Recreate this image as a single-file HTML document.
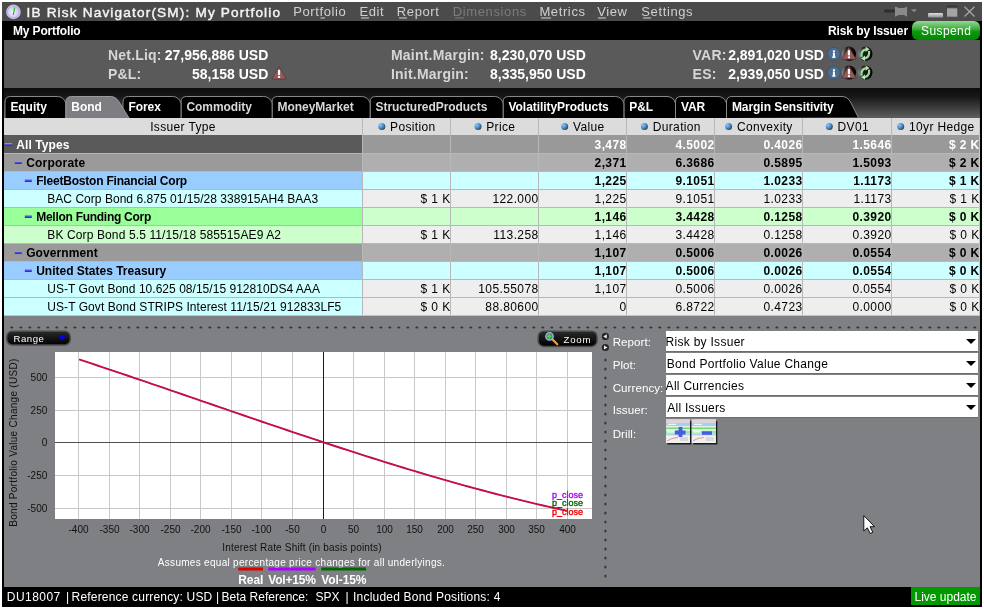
<!DOCTYPE html>
<html><head><meta charset="utf-8"><style>
html,body{margin:0;padding:0;background:#fff;width:984px;height:609px;overflow:hidden}
svg{display:block;will-change:transform}
text{font-family:"Liberation Sans", sans-serif;}
</style></head><body>
<svg width="984" height="609" viewBox="0 0 984 609">
<rect x="0" y="0" width="984" height="609" fill="#ffffff" />
<rect x="2" y="2" width="980" height="605" fill="#000000" />
<rect x="2" y="2" width="980" height="19" fill="#4b4b4b" />
<defs><radialGradient id="gIcon" cx="0.45" cy="0.55" r="0.6"><stop offset="0" stop-color="#f4f4ff"/><stop offset="1" stop-color="#c0c0ea"/></radialGradient><linearGradient id="gTabBar" x1="0" y1="0" x2="0" y2="1"><stop offset="0" stop-color="#0c0c0c"/><stop offset="0.3" stop-color="#181818"/><stop offset="1" stop-color="#5e5e5e"/></linearGradient><linearGradient id="gSusp" x1="0" y1="0" x2="0" y2="1"><stop offset="0" stop-color="#98d898"/><stop offset="0.42" stop-color="#3cae3c"/><stop offset="0.56" stop-color="#0e960e"/><stop offset="1" stop-color="#008a00"/></linearGradient><linearGradient id="gMin" x1="0" y1="0" x2="0" y2="1"><stop offset="0" stop-color="#e0e0e0"/><stop offset="1" stop-color="#909090"/></linearGradient><linearGradient id="gPill" x1="0" y1="0" x2="0" y2="1"><stop offset="0" stop-color="#2a2a2a"/><stop offset="1" stop-color="#000"/></linearGradient><radialGradient id="gDot" cx="0.3" cy="0.3" r="0.8"><stop offset="0" stop-color="#8cc4ff"/><stop offset="0.5" stop-color="#4f90d0"/><stop offset="0.85" stop-color="#2a5a70"/><stop offset="1" stop-color="#1a4040"/></radialGradient><linearGradient id="gDark" x1="0" y1="0" x2="1" y2="0"><stop offset="0" stop-color="#8a8a8a"/><stop offset="0.35" stop-color="#222"/><stop offset="1" stop-color="#000"/></linearGradient></defs>
<circle cx="13.45" cy="11.9" r="7.3" fill="#c4c4ee"/>
<circle cx="13.45" cy="11.9" r="5.9" fill="url(#gIcon)" stroke="#a8a8d0" stroke-width="0.7"/>
<line x1="14.1" y1="10.8" x2="13.2" y2="15" stroke="#707088" stroke-width="1.1"/>
<line x1="14.6" y1="7.3" x2="14.1" y2="11" stroke="#30d030" stroke-width="1.5"/>
<text x="26.5" y="16.7" font-size="13.6" font-weight="normal" fill="#f4f4f4" text-anchor="start" letter-spacing="1.17" stroke="#f4f4f4" stroke-width="0.45">IB Risk Navigator(SM): My Portfolio</text>
<text x="293.2" y="16.3" font-size="13" font-weight="normal" fill="#d0d0d0" text-anchor="start" letter-spacing="0.62" >Portfolio</text>
<text x="359.4" y="16.3" font-size="13" font-weight="normal" fill="#d0d0d0" text-anchor="start" letter-spacing="0.62" >Edit</text>
<text x="396.8" y="16.3" font-size="13" font-weight="normal" fill="#d0d0d0" text-anchor="start" letter-spacing="0.62" >Report</text>
<text x="452.8" y="16.3" font-size="13" font-weight="normal" fill="#7c7c7c" text-anchor="start" letter-spacing="0.62" >Dimensions</text>
<text x="539.4" y="16.3" font-size="13" font-weight="normal" fill="#d0d0d0" text-anchor="start" letter-spacing="0.62" >Metrics</text>
<text x="597.2" y="16.3" font-size="13" font-weight="normal" fill="#d0d0d0" text-anchor="start" letter-spacing="0.62" >View</text>
<text x="641.3" y="16.3" font-size="13" font-weight="normal" fill="#d0d0d0" text-anchor="start" letter-spacing="0.62" >Settings</text>
<rect x="320.5" y="17.5" width="4.5" height="1" fill="#d0d0d0" />
<rect x="361" y="17.5" width="8" height="1" fill="#d0d0d0" />
<rect x="399" y="17.5" width="8" height="1" fill="#d0d0d0" />
<rect x="455" y="17.5" width="9" height="1" fill="#7c7c7c" />
<rect x="541" y="17.5" width="10" height="1" fill="#d0d0d0" />
<rect x="598" y="17.5" width="8" height="1" fill="#d0d0d0" />
<rect x="643" y="17.5" width="8" height="1" fill="#d0d0d0" />
<rect x="884" y="9.6" width="11" height="3" rx="1.4" fill="#2e2e2e"/>
<path d="M895 6.5 L899 8 L904 8 L907 6.5 L907 16.8 L904 15 L899 15 L895 16.8 Z" fill="#8a8a8a"/>
<path d="M911 9.3 L917 9.3 L914 12.3 Z" fill="#8a8a8a"/>
<rect x="928" y="13" width="15" height="4.4" rx="1.2" fill="url(#gMin)"/>
<rect x="947" y="8.3" width="10.3" height="8.4" fill="#a4a4a4" />
<rect x="946.5" y="5.6" width="11.5" height="1.2" fill="#353535" />
<path d="M964.5 6.8 L974.5 16.5 M974.5 6.8 L964.5 16.5" stroke="#a8a8a8" stroke-width="1.2"/>
<text x="13" y="34.5" font-size="12" font-weight="bold" fill="#ffffff" text-anchor="start" letter-spacing="-0.15" >My Portfolio</text>
<text x="828" y="34.7" font-size="12" font-weight="bold" fill="#ffffff" text-anchor="start" letter-spacing="-0.1" >Risk by Issuer</text>
<rect x="912" y="21" width="68" height="19" rx="6" fill="url(#gSusp)"/>
<text x="946.2" y="34.7" font-size="12" font-weight="normal" fill="#ffffff" text-anchor="middle" letter-spacing="0.4" >Suspend</text>
<rect x="4" y="40" width="976" height="48" fill="#5a5a5a" />
<text x="108" y="59.7" font-size="14" font-weight="bold" fill="#d6d6d6" text-anchor="start" letter-spacing="0.2" >Net.Liq:</text>
<text x="268.3" y="59.7" font-size="14" font-weight="bold" fill="#ffffff" text-anchor="end" >27,956,886 USD</text>
<text x="108" y="78.6" font-size="14" font-weight="bold" fill="#d6d6d6" text-anchor="start" letter-spacing="0.2" >P&amp;L:</text>
<text x="268.3" y="78.6" font-size="14" font-weight="bold" fill="#ffffff" text-anchor="end" >58,158 USD</text>
<text x="391" y="59.7" font-size="14" font-weight="bold" fill="#d6d6d6" text-anchor="start" letter-spacing="0.2" >Maint.Margin:</text>
<text x="585.8" y="59.7" font-size="14" font-weight="bold" fill="#ffffff" text-anchor="end" >8,230,070 USD</text>
<text x="391" y="78.6" font-size="14" font-weight="bold" fill="#d6d6d6" text-anchor="start" letter-spacing="0.2" >Init.Margin:</text>
<text x="585.8" y="78.6" font-size="14" font-weight="bold" fill="#ffffff" text-anchor="end" >8,335,950 USD</text>
<text x="692.6" y="59.7" font-size="14" font-weight="bold" fill="#d6d6d6" text-anchor="start" letter-spacing="0.2" >VAR:</text>
<text x="823.9" y="59.7" font-size="14" font-weight="bold" fill="#ffffff" text-anchor="end" >2,891,020 USD</text>
<text x="692.6" y="78.6" font-size="14" font-weight="bold" fill="#d6d6d6" text-anchor="start" letter-spacing="0.2" >ES:</text>
<text x="823.9" y="78.6" font-size="14" font-weight="bold" fill="#ffffff" text-anchor="end" >2,939,050 USD</text>
<path d="M279 66.6 L286.2 79.0 L272 79.0 Z" fill="#9c5858" stroke="#3a2a2a" stroke-width="0.5"/>
<rect x="278" y="69.9" width="2.1" height="5.2" fill="#fff"/><rect x="278" y="76.1" width="2.1" height="1.9" fill="#fff"/>
<circle cx="833.8" cy="53.8" r="6.4" fill="#4c6c92" stroke="#34506e" stroke-width="0.8"/>
<rect x="832.9" y="50.4" width="2" height="1.8" fill="#fff"/><rect x="832.9" y="52.599999999999994" width="2" height="5" fill="#fff"/><rect x="832.0" y="56.599999999999994" width="3.6" height="1.1" fill="#fff"/>
<circle cx="848.9" cy="53.8" r="7.2" fill="url(#gDark)"/>
<path d="M848.9 46.9 L856.1 59.3 L841.9 59.3 Z" fill="#9c5858" stroke="#3a2a2a" stroke-width="0.5"/>
<rect x="847.9" y="50.199999999999996" width="2.1" height="5.2" fill="#fff"/><rect x="847.9" y="56.4" width="2.1" height="1.9" fill="#fff"/>
<circle cx="865.3" cy="53.8" r="7.2" fill="url(#gDark)"/>
<path d="M861.5 56.8 Q860.8 50.3 865.8 49.3" stroke="#9cd89c" stroke-width="2.2" fill="none"/>
<path d="M865.5999999999999 46.599999999999994 L869.5 49.199999999999996 L865.5999999999999 52.0 Z" fill="#b0e8b0"/>
<path d="M869.0999999999999 50.8 Q869.8 57.3 864.8 58.3" stroke="#9cd89c" stroke-width="2.2" fill="none"/>
<path d="M865.0 61.0 L861.0999999999999 58.4 L865.0 55.599999999999994 Z" fill="#b0e8b0"/>
<circle cx="833.8" cy="72.6" r="6.4" fill="#4c6c92" stroke="#34506e" stroke-width="0.8"/>
<rect x="832.9" y="69.19999999999999" width="2" height="1.8" fill="#fff"/><rect x="832.9" y="71.39999999999999" width="2" height="5" fill="#fff"/><rect x="832.0" y="75.39999999999999" width="3.6" height="1.1" fill="#fff"/>
<circle cx="848.9" cy="72.6" r="7.2" fill="url(#gDark)"/>
<path d="M848.9 65.69999999999999 L856.1 78.1 L841.9 78.1 Z" fill="#9c5858" stroke="#3a2a2a" stroke-width="0.5"/>
<rect x="847.9" y="69.0" width="2.1" height="5.2" fill="#fff"/><rect x="847.9" y="75.19999999999999" width="2.1" height="1.9" fill="#fff"/>
<circle cx="865.3" cy="72.6" r="7.2" fill="url(#gDark)"/>
<path d="M861.5 75.6 Q860.8 69.1 865.8 68.1" stroke="#9cd89c" stroke-width="2.2" fill="none"/>
<path d="M865.5999999999999 65.39999999999999 L869.5 68.0 L865.5999999999999 70.8 Z" fill="#b0e8b0"/>
<path d="M869.0999999999999 69.6 Q869.8 76.1 864.8 77.1" stroke="#9cd89c" stroke-width="2.2" fill="none"/>
<path d="M865.0 79.8 L861.0999999999999 77.19999999999999 L865.0 74.39999999999999 Z" fill="#b0e8b0"/>
<rect x="4" y="88" width="976" height="30" fill="url(#gTabBar)" />
<path d="M726.5 118.5 L726.5 102 Q726.5 96.5 732 96.5 L843 96.5 Q847 96.5 850 101 L858.6 118 Z" fill="#000" stroke="#888" stroke-width="1"/>
<path d="M675.5 118.5 L675.5 102 Q675.5 96.5 681 96.5 L718 96.5 Q724 96.5 726.5 103 L726.5 118.5 Z" fill="#000" stroke="#888" stroke-width="1"/>
<path d="M623.9 118.5 L623.9 102 Q623.9 96.5 629.4 96.5 L667 96.5 Q673 96.5 675.5 103 L675.5 118.5 Z" fill="#000" stroke="#888" stroke-width="1"/>
<path d="M503.1 118.5 L503.1 102 Q503.1 96.5 508.6 96.5 L615.4 96.5 Q621.4 96.5 623.9 103 L623.9 118.5 Z" fill="#000" stroke="#888" stroke-width="1"/>
<path d="M370.1 118.5 L370.1 102 Q370.1 96.5 375.6 96.5 L494.6 96.5 Q500.6 96.5 503.1 103 L503.1 118.5 Z" fill="#000" stroke="#888" stroke-width="1"/>
<path d="M272.1 118.5 L272.1 102 Q272.1 96.5 277.6 96.5 L361.6 96.5 Q367.6 96.5 370.1 103 L370.1 118.5 Z" fill="#000" stroke="#888" stroke-width="1"/>
<path d="M181.0 118.5 L181.0 102 Q181.0 96.5 186.5 96.5 L263.6 96.5 Q269.6 96.5 272.1 103 L272.1 118.5 Z" fill="#000" stroke="#888" stroke-width="1"/>
<path d="M123.0 118.5 L123.0 102 Q123.0 96.5 128.5 96.5 L172.5 96.5 Q178.5 96.5 181.0 103 L181.0 118.5 Z" fill="#000" stroke="#888" stroke-width="1"/>
<path d="M5.0 118.5 L5.0 102 Q5.0 96.5 10.5 96.5 L57.400000000000006 96.5 Q63.400000000000006 96.5 65.9 103 L65.9 118.5 Z" fill="#000" stroke="#888" stroke-width="1"/>
<path d="M65.9 118.5 L65.9 102 Q65.9 96.5 71.5 96.5 L111.5 96.5 Q115.5 96.5 118.5 101 L129.4 118.5 Z" fill="#7d7d82" stroke="#9a9a9a" stroke-width="1"/>
<text x="10.4" y="110.7" font-size="12" font-weight="bold" fill="#ffffff" text-anchor="start" letter-spacing="-0.05" >Equity</text>
<text x="71.30000000000001" y="110.7" font-size="12" font-weight="bold" fill="#ffffff" text-anchor="start" letter-spacing="-0.05" >Bond</text>
<text x="128.4" y="110.7" font-size="12" font-weight="bold" fill="#ffffff" text-anchor="start" letter-spacing="-0.05" >Forex</text>
<text x="186.4" y="110.7" font-size="12" font-weight="bold" fill="#d8d8d8" text-anchor="start" letter-spacing="-0.05" >Commodity</text>
<text x="277.5" y="110.7" font-size="12" font-weight="bold" fill="#d8d8d8" text-anchor="start" letter-spacing="-0.05" >MoneyMarket</text>
<text x="375.5" y="110.7" font-size="12" font-weight="bold" fill="#d8d8d8" text-anchor="start" letter-spacing="-0.05" >StructuredProducts</text>
<text x="508.5" y="110.7" font-size="12" font-weight="bold" fill="#ffffff" text-anchor="start" letter-spacing="-0.05" >VolatilityProducts</text>
<text x="629.3" y="110.7" font-size="12" font-weight="bold" fill="#ffffff" text-anchor="start" letter-spacing="-0.05" >P&amp;L</text>
<text x="680.9" y="110.7" font-size="12" font-weight="bold" fill="#ffffff" text-anchor="start" letter-spacing="-0.05" >VAR</text>
<text x="731.9" y="110.7" font-size="12" font-weight="bold" fill="#ffffff" text-anchor="start" letter-spacing="-0.05" >Margin Sensitivity</text>
<rect x="4" y="118" width="975" height="17" fill="#dcdcdc" />
<text x="183.0" y="130.5" font-size="12" font-weight="normal" fill="#000" text-anchor="middle" letter-spacing="0.35" >Issuer Type</text>
<circle cx="381.8" cy="126.5" r="3.5" fill="url(#gDot)"/>
<text x="390.05" y="130.5" font-size="12" font-weight="normal" fill="#000" text-anchor="start" letter-spacing="0.35" >Position</text>
<circle cx="478.0" cy="126.5" r="3.5" fill="url(#gDot)"/>
<text x="486.255" y="130.5" font-size="12" font-weight="normal" fill="#000" text-anchor="start" letter-spacing="0.35" >Price</text>
<circle cx="564.7" cy="126.5" r="3.5" fill="url(#gDot)"/>
<text x="573.02" y="130.5" font-size="12" font-weight="normal" fill="#000" text-anchor="start" letter-spacing="0.35" >Value</text>
<circle cx="644.4" cy="126.5" r="3.5" fill="url(#gDot)"/>
<text x="652.7199999999999" y="130.5" font-size="12" font-weight="normal" fill="#000" text-anchor="start" letter-spacing="0.35" >Duration</text>
<circle cx="728.6" cy="126.5" r="3.5" fill="url(#gDot)"/>
<text x="736.88" y="130.5" font-size="12" font-weight="normal" fill="#000" text-anchor="start" letter-spacing="0.35" >Convexity</text>
<circle cx="829.3" cy="126.5" r="3.5" fill="url(#gDot)"/>
<text x="837.5849999999999" y="130.5" font-size="12" font-weight="normal" fill="#000" text-anchor="start" letter-spacing="0.35" >DV01</text>
<circle cx="900.7" cy="126.5" r="3.5" fill="url(#gDot)"/>
<text x="909.025" y="130.5" font-size="12" font-weight="normal" fill="#000" text-anchor="start" letter-spacing="0.35" >10yr Hedge</text>
<rect x="4" y="135" width="358" height="18" fill="#5a5a5a" />
<rect x="362" y="135" width="617" height="18" fill="#999999" />
<rect x="4.8" y="143" width="7" height="1" fill="#8c8cff" />
<rect x="4.8" y="144" width="7" height="1" fill="#5050e0" />
<rect x="4.8" y="145" width="7" height="1" fill="#3434a0" />
<text x="16.2" y="148.7" font-size="12" font-weight="bold" fill="#ffffff" text-anchor="start" letter-spacing="0.1" >All Types</text>
<text x="626.6" y="148.7" font-size="12" font-weight="bold" fill="#ffffff" text-anchor="end" letter-spacing="0.4" >3,478</text>
<text x="714.6" y="148.7" font-size="12" font-weight="bold" fill="#ffffff" text-anchor="end" letter-spacing="0.4" >4.5002</text>
<text x="802.6" y="148.7" font-size="12" font-weight="bold" fill="#ffffff" text-anchor="end" letter-spacing="0.4" >0.4026</text>
<text x="891.6" y="148.7" font-size="12" font-weight="bold" fill="#ffffff" text-anchor="end" letter-spacing="0.4" >1.5646</text>
<text x="979.6" y="148.7" font-size="12" font-weight="bold" fill="#ffffff" text-anchor="end" letter-spacing="0.4" >$ 2 K</text>
<rect x="4" y="153" width="358" height="18" fill="#9a9a9a" />
<rect x="362" y="153" width="617" height="18" fill="#afafaf" />
<rect x="4" y="153" width="975" height="1" fill="#b8b8b8" />
<rect x="14.8" y="161" width="7" height="1" fill="#8c8cff" />
<rect x="14.8" y="162" width="7" height="1" fill="#5050e0" />
<rect x="14.8" y="163" width="7" height="1" fill="#3434a0" />
<text x="26.200000000000003" y="166.7" font-size="12" font-weight="bold" fill="#000000" text-anchor="start" letter-spacing="0.2" >Corporate</text>
<text x="626.6" y="166.7" font-size="12" font-weight="bold" fill="#000000" text-anchor="end" letter-spacing="0.4" >2,371</text>
<text x="714.6" y="166.7" font-size="12" font-weight="bold" fill="#000000" text-anchor="end" letter-spacing="0.4" >6.3686</text>
<text x="802.6" y="166.7" font-size="12" font-weight="bold" fill="#000000" text-anchor="end" letter-spacing="0.4" >0.5895</text>
<text x="891.6" y="166.7" font-size="12" font-weight="bold" fill="#000000" text-anchor="end" letter-spacing="0.4" >1.5093</text>
<text x="979.6" y="166.7" font-size="12" font-weight="bold" fill="#000000" text-anchor="end" letter-spacing="0.4" >$ 2 K</text>
<rect x="4" y="171" width="358" height="18" fill="#99ccff" />
<rect x="362" y="171" width="617" height="18" fill="#ccffff" />
<rect x="4" y="171" width="975" height="1" fill="#b8b8b8" />
<rect x="24.8" y="179" width="7" height="1" fill="#8c8cff" />
<rect x="24.8" y="180" width="7" height="1" fill="#5050e0" />
<rect x="24.8" y="181" width="7" height="1" fill="#3434a0" />
<text x="36.2" y="184.7" font-size="12" font-weight="bold" fill="#000000" text-anchor="start" letter-spacing="-0.2" >FleetBoston Financial Corp</text>
<text x="626.6" y="184.7" font-size="12" font-weight="bold" fill="#000000" text-anchor="end" letter-spacing="0.4" >1,225</text>
<text x="714.6" y="184.7" font-size="12" font-weight="bold" fill="#000000" text-anchor="end" letter-spacing="0.4" >9.1051</text>
<text x="802.6" y="184.7" font-size="12" font-weight="bold" fill="#000000" text-anchor="end" letter-spacing="0.4" >1.0233</text>
<text x="891.6" y="184.7" font-size="12" font-weight="bold" fill="#000000" text-anchor="end" letter-spacing="0.4" >1.1173</text>
<text x="979.6" y="184.7" font-size="12" font-weight="bold" fill="#000000" text-anchor="end" letter-spacing="0.4" >$ 1 K</text>
<rect x="4" y="189" width="358" height="18" fill="#ccffff" />
<rect x="362" y="189" width="617" height="18" fill="#eeeeee" />
<rect x="4" y="189" width="975" height="1" fill="#b8b8b8" />
<text x="47.3" y="202.7" font-size="12" font-weight="normal" fill="#000000" text-anchor="start" letter-spacing="0.03" >BAC Corp Bond 6.875 01/15/28 338915AH4 BAA3</text>
<text x="450.6" y="202.7" font-size="12" font-weight="normal" fill="#000000" text-anchor="end" letter-spacing="0.4" >$ 1 K</text>
<text x="538.6" y="202.7" font-size="12" font-weight="normal" fill="#000000" text-anchor="end" letter-spacing="0.4" >122.000</text>
<text x="626.6" y="202.7" font-size="12" font-weight="normal" fill="#000000" text-anchor="end" letter-spacing="0.4" >1,225</text>
<text x="714.6" y="202.7" font-size="12" font-weight="normal" fill="#000000" text-anchor="end" letter-spacing="0.4" >9.1051</text>
<text x="802.6" y="202.7" font-size="12" font-weight="normal" fill="#000000" text-anchor="end" letter-spacing="0.4" >1.0233</text>
<text x="891.6" y="202.7" font-size="12" font-weight="normal" fill="#000000" text-anchor="end" letter-spacing="0.4" >1.1173</text>
<text x="979.6" y="202.7" font-size="12" font-weight="normal" fill="#000000" text-anchor="end" letter-spacing="0.4" >$ 1 K</text>
<rect x="4" y="207" width="358" height="18" fill="#99ff99" />
<rect x="362" y="207" width="617" height="18" fill="#ccffcc" />
<rect x="4" y="207" width="975" height="1" fill="#b8b8b8" />
<rect x="24.8" y="215" width="7" height="1" fill="#8c8cff" />
<rect x="24.8" y="216" width="7" height="1" fill="#5050e0" />
<rect x="24.8" y="217" width="7" height="1" fill="#3434a0" />
<text x="36.2" y="220.7" font-size="12" font-weight="bold" fill="#000000" text-anchor="start" letter-spacing="-0.27" >Mellon Funding Corp</text>
<text x="626.6" y="220.7" font-size="12" font-weight="bold" fill="#000000" text-anchor="end" letter-spacing="0.4" >1,146</text>
<text x="714.6" y="220.7" font-size="12" font-weight="bold" fill="#000000" text-anchor="end" letter-spacing="0.4" >3.4428</text>
<text x="802.6" y="220.7" font-size="12" font-weight="bold" fill="#000000" text-anchor="end" letter-spacing="0.4" >0.1258</text>
<text x="891.6" y="220.7" font-size="12" font-weight="bold" fill="#000000" text-anchor="end" letter-spacing="0.4" >0.3920</text>
<text x="979.6" y="220.7" font-size="12" font-weight="bold" fill="#000000" text-anchor="end" letter-spacing="0.4" >$ 0 K</text>
<rect x="4" y="225" width="358" height="18" fill="#ccffcc" />
<rect x="362" y="225" width="617" height="18" fill="#eeeeee" />
<rect x="4" y="225" width="975" height="1" fill="#b8b8b8" />
<text x="47.3" y="238.7" font-size="12" font-weight="normal" fill="#000000" text-anchor="start" letter-spacing="0.12" >BK Corp Bond 5.5 11/15/18 585515AE9 A2</text>
<text x="450.6" y="238.7" font-size="12" font-weight="normal" fill="#000000" text-anchor="end" letter-spacing="0.4" >$ 1 K</text>
<text x="538.6" y="238.7" font-size="12" font-weight="normal" fill="#000000" text-anchor="end" letter-spacing="0.4" >113.258</text>
<text x="626.6" y="238.7" font-size="12" font-weight="normal" fill="#000000" text-anchor="end" letter-spacing="0.4" >1,146</text>
<text x="714.6" y="238.7" font-size="12" font-weight="normal" fill="#000000" text-anchor="end" letter-spacing="0.4" >3.4428</text>
<text x="802.6" y="238.7" font-size="12" font-weight="normal" fill="#000000" text-anchor="end" letter-spacing="0.4" >0.1258</text>
<text x="891.6" y="238.7" font-size="12" font-weight="normal" fill="#000000" text-anchor="end" letter-spacing="0.4" >0.3920</text>
<text x="979.6" y="238.7" font-size="12" font-weight="normal" fill="#000000" text-anchor="end" letter-spacing="0.4" >$ 0 K</text>
<rect x="4" y="243" width="358" height="18" fill="#9a9a9a" />
<rect x="362" y="243" width="617" height="18" fill="#afafaf" />
<rect x="4" y="243" width="975" height="1" fill="#b8b8b8" />
<rect x="14.8" y="251" width="7" height="1" fill="#8c8cff" />
<rect x="14.8" y="252" width="7" height="1" fill="#5050e0" />
<rect x="14.8" y="253" width="7" height="1" fill="#3434a0" />
<text x="26.200000000000003" y="256.7" font-size="12" font-weight="bold" fill="#000000" text-anchor="start" letter-spacing="0.1" >Government</text>
<text x="626.6" y="256.7" font-size="12" font-weight="bold" fill="#000000" text-anchor="end" letter-spacing="0.4" >1,107</text>
<text x="714.6" y="256.7" font-size="12" font-weight="bold" fill="#000000" text-anchor="end" letter-spacing="0.4" >0.5006</text>
<text x="802.6" y="256.7" font-size="12" font-weight="bold" fill="#000000" text-anchor="end" letter-spacing="0.4" >0.0026</text>
<text x="891.6" y="256.7" font-size="12" font-weight="bold" fill="#000000" text-anchor="end" letter-spacing="0.4" >0.0554</text>
<text x="979.6" y="256.7" font-size="12" font-weight="bold" fill="#000000" text-anchor="end" letter-spacing="0.4" >$ 0 K</text>
<rect x="4" y="261" width="358" height="18" fill="#99ccff" />
<rect x="362" y="261" width="617" height="18" fill="#ccffff" />
<rect x="4" y="261" width="975" height="1" fill="#b8b8b8" />
<rect x="24.8" y="269" width="7" height="1" fill="#8c8cff" />
<rect x="24.8" y="270" width="7" height="1" fill="#5050e0" />
<rect x="24.8" y="271" width="7" height="1" fill="#3434a0" />
<text x="36.2" y="274.7" font-size="12" font-weight="bold" fill="#000000" text-anchor="start" >United States Treasury</text>
<text x="626.6" y="274.7" font-size="12" font-weight="bold" fill="#000000" text-anchor="end" letter-spacing="0.4" >1,107</text>
<text x="714.6" y="274.7" font-size="12" font-weight="bold" fill="#000000" text-anchor="end" letter-spacing="0.4" >0.5006</text>
<text x="802.6" y="274.7" font-size="12" font-weight="bold" fill="#000000" text-anchor="end" letter-spacing="0.4" >0.0026</text>
<text x="891.6" y="274.7" font-size="12" font-weight="bold" fill="#000000" text-anchor="end" letter-spacing="0.4" >0.0554</text>
<text x="979.6" y="274.7" font-size="12" font-weight="bold" fill="#000000" text-anchor="end" letter-spacing="0.4" >$ 0 K</text>
<rect x="4" y="279" width="358" height="18" fill="#ccffff" />
<rect x="362" y="279" width="617" height="18" fill="#eeeeee" />
<rect x="4" y="279" width="975" height="1" fill="#b8b8b8" />
<text x="47.3" y="292.7" font-size="12" font-weight="normal" fill="#000000" text-anchor="start" letter-spacing="0.03" >US-T Govt Bond 10.625 08/15/15 912810DS4 AAA</text>
<text x="450.6" y="292.7" font-size="12" font-weight="normal" fill="#000000" text-anchor="end" letter-spacing="0.4" >$ 1 K</text>
<text x="538.6" y="292.7" font-size="12" font-weight="normal" fill="#000000" text-anchor="end" letter-spacing="0.4" >105.55078</text>
<text x="626.6" y="292.7" font-size="12" font-weight="normal" fill="#000000" text-anchor="end" letter-spacing="0.4" >1,107</text>
<text x="714.6" y="292.7" font-size="12" font-weight="normal" fill="#000000" text-anchor="end" letter-spacing="0.4" >0.5006</text>
<text x="802.6" y="292.7" font-size="12" font-weight="normal" fill="#000000" text-anchor="end" letter-spacing="0.4" >0.0026</text>
<text x="891.6" y="292.7" font-size="12" font-weight="normal" fill="#000000" text-anchor="end" letter-spacing="0.4" >0.0554</text>
<text x="979.6" y="292.7" font-size="12" font-weight="normal" fill="#000000" text-anchor="end" letter-spacing="0.4" >$ 0 K</text>
<rect x="4" y="297" width="358" height="18" fill="#ccffff" />
<rect x="362" y="297" width="617" height="18" fill="#eeeeee" />
<rect x="4" y="297" width="975" height="1" fill="#b8b8b8" />
<text x="47.3" y="310.7" font-size="12" font-weight="normal" fill="#000000" text-anchor="start" letter-spacing="0.06" >US-T Govt Bond STRIPS Interest 11/15/21 912833LF5</text>
<text x="450.6" y="310.7" font-size="12" font-weight="normal" fill="#000000" text-anchor="end" letter-spacing="0.4" >$ 0 K</text>
<text x="538.6" y="310.7" font-size="12" font-weight="normal" fill="#000000" text-anchor="end" letter-spacing="0.4" >88.80600</text>
<text x="626.6" y="310.7" font-size="12" font-weight="normal" fill="#000000" text-anchor="end" letter-spacing="0.4" >0</text>
<text x="714.6" y="310.7" font-size="12" font-weight="normal" fill="#000000" text-anchor="end" letter-spacing="0.4" >6.8722</text>
<text x="802.6" y="310.7" font-size="12" font-weight="normal" fill="#000000" text-anchor="end" letter-spacing="0.4" >0.4723</text>
<text x="891.6" y="310.7" font-size="12" font-weight="normal" fill="#000000" text-anchor="end" letter-spacing="0.4" >0.0000</text>
<text x="979.6" y="310.7" font-size="12" font-weight="normal" fill="#000000" text-anchor="end" letter-spacing="0.4" >$ 0 K</text>
<rect x="362" y="118" width="1" height="198" fill="#b8b8b8" />
<rect x="450" y="118" width="1" height="198" fill="#b8b8b8" />
<rect x="538" y="118" width="1" height="198" fill="#b8b8b8" />
<rect x="626" y="118" width="1" height="198" fill="#b8b8b8" />
<rect x="714" y="118" width="1" height="198" fill="#b8b8b8" />
<rect x="802" y="118" width="1" height="198" fill="#b8b8b8" />
<rect x="891" y="118" width="1" height="198" fill="#b8b8b8" />
<rect x="4" y="315" width="975" height="1" fill="#c4c4c4" />
<rect x="979" y="118" width="1" height="198" fill="#c8c8c8" />
<rect x="4" y="316" width="976" height="271" fill="#7f8084" />
<ellipse cx="11.8" cy="327.5" rx="1.5" ry="1.1" fill="#343434"/>
<ellipse cx="20.8" cy="327.5" rx="1.5" ry="1.1" fill="#343434"/>
<ellipse cx="29.8" cy="327.5" rx="1.5" ry="1.1" fill="#343434"/>
<ellipse cx="38.8" cy="327.5" rx="1.5" ry="1.1" fill="#343434"/>
<ellipse cx="47.8" cy="327.5" rx="1.5" ry="1.1" fill="#343434"/>
<ellipse cx="56.8" cy="327.5" rx="1.5" ry="1.1" fill="#343434"/>
<ellipse cx="65.8" cy="327.5" rx="1.5" ry="1.1" fill="#343434"/>
<ellipse cx="74.8" cy="327.5" rx="1.5" ry="1.1" fill="#343434"/>
<ellipse cx="83.8" cy="327.5" rx="1.5" ry="1.1" fill="#343434"/>
<ellipse cx="92.8" cy="327.5" rx="1.5" ry="1.1" fill="#343434"/>
<ellipse cx="101.8" cy="327.5" rx="1.5" ry="1.1" fill="#343434"/>
<ellipse cx="110.8" cy="327.5" rx="1.5" ry="1.1" fill="#343434"/>
<ellipse cx="119.8" cy="327.5" rx="1.5" ry="1.1" fill="#343434"/>
<ellipse cx="128.8" cy="327.5" rx="1.5" ry="1.1" fill="#343434"/>
<ellipse cx="137.8" cy="327.5" rx="1.5" ry="1.1" fill="#343434"/>
<ellipse cx="146.8" cy="327.5" rx="1.5" ry="1.1" fill="#343434"/>
<ellipse cx="155.8" cy="327.5" rx="1.5" ry="1.1" fill="#343434"/>
<ellipse cx="164.8" cy="327.5" rx="1.5" ry="1.1" fill="#343434"/>
<ellipse cx="173.8" cy="327.5" rx="1.5" ry="1.1" fill="#343434"/>
<ellipse cx="182.8" cy="327.5" rx="1.5" ry="1.1" fill="#343434"/>
<ellipse cx="191.8" cy="327.5" rx="1.5" ry="1.1" fill="#343434"/>
<ellipse cx="200.8" cy="327.5" rx="1.5" ry="1.1" fill="#343434"/>
<ellipse cx="209.8" cy="327.5" rx="1.5" ry="1.1" fill="#343434"/>
<ellipse cx="218.8" cy="327.5" rx="1.5" ry="1.1" fill="#343434"/>
<ellipse cx="227.8" cy="327.5" rx="1.5" ry="1.1" fill="#343434"/>
<ellipse cx="236.8" cy="327.5" rx="1.5" ry="1.1" fill="#343434"/>
<ellipse cx="245.8" cy="327.5" rx="1.5" ry="1.1" fill="#343434"/>
<ellipse cx="254.8" cy="327.5" rx="1.5" ry="1.1" fill="#343434"/>
<ellipse cx="263.8" cy="327.5" rx="1.5" ry="1.1" fill="#343434"/>
<ellipse cx="272.8" cy="327.5" rx="1.5" ry="1.1" fill="#343434"/>
<ellipse cx="281.8" cy="327.5" rx="1.5" ry="1.1" fill="#343434"/>
<ellipse cx="290.8" cy="327.5" rx="1.5" ry="1.1" fill="#343434"/>
<ellipse cx="299.8" cy="327.5" rx="1.5" ry="1.1" fill="#343434"/>
<ellipse cx="308.8" cy="327.5" rx="1.5" ry="1.1" fill="#343434"/>
<ellipse cx="317.8" cy="327.5" rx="1.5" ry="1.1" fill="#343434"/>
<ellipse cx="326.8" cy="327.5" rx="1.5" ry="1.1" fill="#343434"/>
<ellipse cx="335.8" cy="327.5" rx="1.5" ry="1.1" fill="#343434"/>
<ellipse cx="344.8" cy="327.5" rx="1.5" ry="1.1" fill="#343434"/>
<ellipse cx="353.8" cy="327.5" rx="1.5" ry="1.1" fill="#343434"/>
<ellipse cx="362.8" cy="327.5" rx="1.5" ry="1.1" fill="#343434"/>
<ellipse cx="371.8" cy="327.5" rx="1.5" ry="1.1" fill="#343434"/>
<ellipse cx="380.8" cy="327.5" rx="1.5" ry="1.1" fill="#343434"/>
<ellipse cx="389.8" cy="327.5" rx="1.5" ry="1.1" fill="#343434"/>
<ellipse cx="398.8" cy="327.5" rx="1.5" ry="1.1" fill="#343434"/>
<ellipse cx="407.8" cy="327.5" rx="1.5" ry="1.1" fill="#343434"/>
<ellipse cx="416.8" cy="327.5" rx="1.5" ry="1.1" fill="#343434"/>
<ellipse cx="425.8" cy="327.5" rx="1.5" ry="1.1" fill="#343434"/>
<ellipse cx="434.8" cy="327.5" rx="1.5" ry="1.1" fill="#343434"/>
<ellipse cx="443.8" cy="327.5" rx="1.5" ry="1.1" fill="#343434"/>
<ellipse cx="452.8" cy="327.5" rx="1.5" ry="1.1" fill="#343434"/>
<ellipse cx="461.8" cy="327.5" rx="1.5" ry="1.1" fill="#343434"/>
<ellipse cx="470.8" cy="327.5" rx="1.5" ry="1.1" fill="#343434"/>
<ellipse cx="479.8" cy="327.5" rx="1.5" ry="1.1" fill="#343434"/>
<ellipse cx="488.8" cy="327.5" rx="1.5" ry="1.1" fill="#343434"/>
<ellipse cx="497.8" cy="327.5" rx="1.5" ry="1.1" fill="#343434"/>
<ellipse cx="506.8" cy="327.5" rx="1.5" ry="1.1" fill="#343434"/>
<ellipse cx="515.8" cy="327.5" rx="1.5" ry="1.1" fill="#343434"/>
<ellipse cx="524.8" cy="327.5" rx="1.5" ry="1.1" fill="#343434"/>
<ellipse cx="533.8" cy="327.5" rx="1.5" ry="1.1" fill="#343434"/>
<ellipse cx="542.8" cy="327.5" rx="1.5" ry="1.1" fill="#343434"/>
<ellipse cx="551.8" cy="327.5" rx="1.5" ry="1.1" fill="#343434"/>
<ellipse cx="560.8" cy="327.5" rx="1.5" ry="1.1" fill="#343434"/>
<ellipse cx="569.8" cy="327.5" rx="1.5" ry="1.1" fill="#343434"/>
<ellipse cx="578.8" cy="327.5" rx="1.5" ry="1.1" fill="#343434"/>
<ellipse cx="587.8" cy="327.5" rx="1.5" ry="1.1" fill="#343434"/>
<ellipse cx="596.8" cy="327.5" rx="1.5" ry="1.1" fill="#343434"/>
<ellipse cx="605.8" cy="327.5" rx="1.5" ry="1.1" fill="#343434"/>
<ellipse cx="614.8" cy="327.5" rx="1.5" ry="1.1" fill="#343434"/>
<ellipse cx="623.8" cy="327.5" rx="1.5" ry="1.1" fill="#343434"/>
<ellipse cx="632.8" cy="327.5" rx="1.5" ry="1.1" fill="#343434"/>
<ellipse cx="641.8" cy="327.5" rx="1.5" ry="1.1" fill="#343434"/>
<ellipse cx="650.8" cy="327.5" rx="1.5" ry="1.1" fill="#343434"/>
<ellipse cx="659.8" cy="327.5" rx="1.5" ry="1.1" fill="#343434"/>
<ellipse cx="668.8" cy="327.5" rx="1.5" ry="1.1" fill="#343434"/>
<ellipse cx="677.8" cy="327.5" rx="1.5" ry="1.1" fill="#343434"/>
<ellipse cx="686.8" cy="327.5" rx="1.5" ry="1.1" fill="#343434"/>
<ellipse cx="695.8" cy="327.5" rx="1.5" ry="1.1" fill="#343434"/>
<ellipse cx="704.8" cy="327.5" rx="1.5" ry="1.1" fill="#343434"/>
<ellipse cx="713.8" cy="327.5" rx="1.5" ry="1.1" fill="#343434"/>
<ellipse cx="722.8" cy="327.5" rx="1.5" ry="1.1" fill="#343434"/>
<ellipse cx="731.8" cy="327.5" rx="1.5" ry="1.1" fill="#343434"/>
<ellipse cx="740.8" cy="327.5" rx="1.5" ry="1.1" fill="#343434"/>
<ellipse cx="749.8" cy="327.5" rx="1.5" ry="1.1" fill="#343434"/>
<ellipse cx="758.8" cy="327.5" rx="1.5" ry="1.1" fill="#343434"/>
<ellipse cx="767.8" cy="327.5" rx="1.5" ry="1.1" fill="#343434"/>
<ellipse cx="776.8" cy="327.5" rx="1.5" ry="1.1" fill="#343434"/>
<ellipse cx="785.8" cy="327.5" rx="1.5" ry="1.1" fill="#343434"/>
<ellipse cx="794.8" cy="327.5" rx="1.5" ry="1.1" fill="#343434"/>
<ellipse cx="803.8" cy="327.5" rx="1.5" ry="1.1" fill="#343434"/>
<ellipse cx="812.8" cy="327.5" rx="1.5" ry="1.1" fill="#343434"/>
<ellipse cx="821.8" cy="327.5" rx="1.5" ry="1.1" fill="#343434"/>
<ellipse cx="830.8" cy="327.5" rx="1.5" ry="1.1" fill="#343434"/>
<ellipse cx="839.8" cy="327.5" rx="1.5" ry="1.1" fill="#343434"/>
<ellipse cx="848.8" cy="327.5" rx="1.5" ry="1.1" fill="#343434"/>
<ellipse cx="857.8" cy="327.5" rx="1.5" ry="1.1" fill="#343434"/>
<ellipse cx="866.8" cy="327.5" rx="1.5" ry="1.1" fill="#343434"/>
<ellipse cx="875.8" cy="327.5" rx="1.5" ry="1.1" fill="#343434"/>
<ellipse cx="884.8" cy="327.5" rx="1.5" ry="1.1" fill="#343434"/>
<ellipse cx="893.8" cy="327.5" rx="1.5" ry="1.1" fill="#343434"/>
<ellipse cx="902.8" cy="327.5" rx="1.5" ry="1.1" fill="#343434"/>
<ellipse cx="911.8" cy="327.5" rx="1.5" ry="1.1" fill="#343434"/>
<ellipse cx="920.8" cy="327.5" rx="1.5" ry="1.1" fill="#343434"/>
<ellipse cx="929.8" cy="327.5" rx="1.5" ry="1.1" fill="#343434"/>
<ellipse cx="938.8" cy="327.5" rx="1.5" ry="1.1" fill="#343434"/>
<ellipse cx="947.8" cy="327.5" rx="1.5" ry="1.1" fill="#343434"/>
<ellipse cx="956.8" cy="327.5" rx="1.5" ry="1.1" fill="#343434"/>
<ellipse cx="965.8" cy="327.5" rx="1.5" ry="1.1" fill="#343434"/>
<ellipse cx="974.8" cy="327.5" rx="1.5" ry="1.1" fill="#343434"/>
<ellipse cx="605.4" cy="360" rx="1.1" ry="1.5" fill="#343434"/>
<ellipse cx="605.4" cy="369" rx="1.1" ry="1.5" fill="#343434"/>
<ellipse cx="605.4" cy="378" rx="1.1" ry="1.5" fill="#343434"/>
<ellipse cx="605.4" cy="387" rx="1.1" ry="1.5" fill="#343434"/>
<ellipse cx="605.4" cy="396" rx="1.1" ry="1.5" fill="#343434"/>
<ellipse cx="605.4" cy="405" rx="1.1" ry="1.5" fill="#343434"/>
<ellipse cx="605.4" cy="414" rx="1.1" ry="1.5" fill="#343434"/>
<ellipse cx="605.4" cy="423" rx="1.1" ry="1.5" fill="#343434"/>
<ellipse cx="605.4" cy="432" rx="1.1" ry="1.5" fill="#343434"/>
<ellipse cx="605.4" cy="441" rx="1.1" ry="1.5" fill="#343434"/>
<ellipse cx="605.4" cy="450" rx="1.1" ry="1.5" fill="#343434"/>
<ellipse cx="605.4" cy="459" rx="1.1" ry="1.5" fill="#343434"/>
<ellipse cx="605.4" cy="468" rx="1.1" ry="1.5" fill="#343434"/>
<ellipse cx="605.4" cy="477" rx="1.1" ry="1.5" fill="#343434"/>
<ellipse cx="605.4" cy="486" rx="1.1" ry="1.5" fill="#343434"/>
<ellipse cx="605.4" cy="495" rx="1.1" ry="1.5" fill="#343434"/>
<ellipse cx="605.4" cy="504" rx="1.1" ry="1.5" fill="#343434"/>
<ellipse cx="605.4" cy="513" rx="1.1" ry="1.5" fill="#343434"/>
<ellipse cx="605.4" cy="522" rx="1.1" ry="1.5" fill="#343434"/>
<ellipse cx="605.4" cy="531" rx="1.1" ry="1.5" fill="#343434"/>
<ellipse cx="605.4" cy="540" rx="1.1" ry="1.5" fill="#343434"/>
<ellipse cx="605.4" cy="549" rx="1.1" ry="1.5" fill="#343434"/>
<ellipse cx="605.4" cy="558" rx="1.1" ry="1.5" fill="#343434"/>
<ellipse cx="605.4" cy="567" rx="1.1" ry="1.5" fill="#343434"/>
<ellipse cx="605.4" cy="576" rx="1.1" ry="1.5" fill="#343434"/>
<rect x="6.8" y="331.2" width="63.4" height="13.8" rx="5.5" fill="url(#gPill)" stroke="#4c4c4c" stroke-width="1.5"/>
<text x="13.6" y="341.9" font-size="9.6" font-weight="normal" fill="#ffffff" text-anchor="start" letter-spacing="0.5" >Range</text>
<path d="M58 335 L66 335 L62 340.8 Z" fill="#0000ff"/>
<rect x="538.2" y="331.2" width="58.8" height="15.2" rx="5.5" fill="url(#gPill)" stroke="#4c4c4c" stroke-width="1.5"/>
<line x1="552.3" y1="339.3" x2="557.3" y2="344.3" stroke="#f0a040" stroke-width="2.2" stroke-linecap="round"/>
<circle cx="549.5" cy="336.4" r="3.7" fill="#5a7a88" stroke="#9cc0d8" stroke-width="1.3"/>
<path d="M549.3 334.2 V338.4 M547.2 336.3 H551.4" stroke="#40e040" stroke-width="1.6"/>
<text x="563.6" y="342.9" font-size="9.6" font-weight="normal" fill="#ffffff" text-anchor="start" letter-spacing="0.75" >Zoom</text>
<circle cx="605.4" cy="336.4" r="3.6" fill="#262626"/><path d="M603.3 336.4 L606.8 334.3 L606.8 338.5 Z" fill="#f0f0f0"/>
<circle cx="605.4" cy="347.5" r="3.6" fill="#262626"/><path d="M607.5 347.5 L604 345.4 L604 349.6 Z" fill="#f0f0f0"/>
<rect x="55" y="352" width="537" height="167" fill="#ffffff" />
<rect x="78" y="352" width="1" height="167" fill="#c8c8c8" />
<rect x="109" y="352" width="1" height="167" fill="#c8c8c8" />
<rect x="139" y="352" width="1" height="167" fill="#c8c8c8" />
<rect x="170" y="352" width="1" height="167" fill="#c8c8c8" />
<rect x="200" y="352" width="1" height="167" fill="#c8c8c8" />
<rect x="231" y="352" width="1" height="167" fill="#c8c8c8" />
<rect x="261" y="352" width="1" height="167" fill="#c8c8c8" />
<rect x="292" y="352" width="1" height="167" fill="#c8c8c8" />
<rect x="353" y="352" width="1" height="167" fill="#c8c8c8" />
<rect x="384" y="352" width="1" height="167" fill="#c8c8c8" />
<rect x="414" y="352" width="1" height="167" fill="#c8c8c8" />
<rect x="445" y="352" width="1" height="167" fill="#c8c8c8" />
<rect x="475" y="352" width="1" height="167" fill="#c8c8c8" />
<rect x="506" y="352" width="1" height="167" fill="#c8c8c8" />
<rect x="536" y="352" width="1" height="167" fill="#c8c8c8" />
<rect x="567" y="352" width="1" height="167" fill="#c8c8c8" />
<rect x="55" y="377" width="537" height="1" fill="#c8c8c8" />
<rect x="55" y="410" width="537" height="1" fill="#c8c8c8" />
<rect x="55" y="475" width="537" height="1" fill="#c8c8c8" />
<rect x="55" y="508" width="537" height="1" fill="#c8c8c8" />
<rect x="55" y="442" width="537" height="1" fill="#505050" />
<rect x="323" y="352" width="1" height="167" fill="#1a1a1a" />
<path d="M79.10 359.43 L85.20 361.45 L91.31 363.47 L97.41 365.49 L103.52 367.53 L109.62 369.57 L115.73 371.62 L121.84 373.68 L127.94 375.74 L134.04 377.81 L140.15 379.88 L146.25 381.96 L152.36 384.04 L158.47 386.13 L164.57 388.22 L170.68 390.31 L176.78 392.41 L182.88 394.50 L188.99 396.60 L195.09 398.70 L201.20 400.80 L207.31 402.90 L213.41 405.00 L219.51 407.10 L225.62 409.20 L231.73 411.29 L237.83 413.39 L243.94 415.48 L250.04 417.57 L256.14 419.65 L262.25 421.74 L268.36 423.81 L274.46 425.89 L280.56 427.95 L286.67 430.01 L292.78 432.07 L298.88 434.12 L304.99 436.16 L311.09 438.19 L317.19 440.22 L323.30 442.24 L329.41 444.25 L335.51 446.25 L341.62 448.24 L347.72 450.22 L353.82 452.19 L359.93 454.14 L366.04 456.09 L372.14 458.02 L378.25 459.95 L384.35 461.86 L390.46 463.75 L396.56 465.63 L402.67 467.50 L408.77 469.36 L414.88 471.19 L420.98 473.02 L427.09 474.82 L433.19 476.61 L439.30 478.39 L445.40 480.14 L451.50 481.88 L457.61 483.60 L463.72 485.30 L469.82 486.98 L475.93 488.64 L482.03 490.28 L488.13 491.91 L494.24 493.51 L500.35 495.09 L506.45 496.64 L512.56 498.18 L518.66 499.69 L524.76 501.18 L530.87 502.64 L536.98 504.08 L543.08 505.50 L549.19 506.89 L555.29 508.26 L561.39 509.60 L567.50 510.91" stroke="#a02068" stroke-width="1.9" fill="none" stroke-linejoin="round"/>
<path d="M79.10 359.43 L85.20 361.45 L91.31 363.47 L97.41 365.49 L103.52 367.53 L109.62 369.57 L115.73 371.62 L121.84 373.68 L127.94 375.74 L134.04 377.81 L140.15 379.88 L146.25 381.96 L152.36 384.04 L158.47 386.13 L164.57 388.22 L170.68 390.31 L176.78 392.41 L182.88 394.50 L188.99 396.60 L195.09 398.70 L201.20 400.80 L207.31 402.90 L213.41 405.00 L219.51 407.10 L225.62 409.20 L231.73 411.29 L237.83 413.39 L243.94 415.48 L250.04 417.57 L256.14 419.65 L262.25 421.74 L268.36 423.81 L274.46 425.89 L280.56 427.95 L286.67 430.01 L292.78 432.07 L298.88 434.12 L304.99 436.16 L311.09 438.19 L317.19 440.22 L323.30 442.24 L329.41 444.25 L335.51 446.25 L341.62 448.24 L347.72 450.22 L353.82 452.19 L359.93 454.14 L366.04 456.09 L372.14 458.02 L378.25 459.95 L384.35 461.86 L390.46 463.75 L396.56 465.63 L402.67 467.50 L408.77 469.36 L414.88 471.19 L420.98 473.02 L427.09 474.82 L433.19 476.61 L439.30 478.39 L445.40 480.14 L451.50 481.88 L457.61 483.60 L463.72 485.30 L469.82 486.98 L475.93 488.64 L482.03 490.28 L488.13 491.91 L494.24 493.51 L500.35 495.09 L506.45 496.64 L512.56 498.18 L518.66 499.69 L524.76 501.18 L530.87 502.64 L536.98 504.08 L543.08 505.50 L549.19 506.89 L555.29 508.26 L561.39 509.60 L567.50 510.91" stroke="#f00020" stroke-width="0.9" fill="none" stroke-linejoin="round"/>
<text x="552" y="497.6" font-size="9" font-weight="normal" fill="#aa00ff" text-anchor="start" stroke="#aa00ff" stroke-width="0.35">p_close</text>
<text x="552" y="505.9" font-size="9" font-weight="normal" fill="#006a00" text-anchor="start" stroke="#006a00" stroke-width="0.35">p_close</text>
<text x="552" y="514.9" font-size="9" font-weight="normal" fill="#ee0000" text-anchor="start" stroke="#ee0000" stroke-width="0.35">p_close</text>
<text x="47.3" y="381" font-size="10" font-weight="normal" fill="#111111" text-anchor="end" >500</text>
<text x="47.3" y="414" font-size="10" font-weight="normal" fill="#111111" text-anchor="end" >250</text>
<text x="47.3" y="446" font-size="10" font-weight="normal" fill="#111111" text-anchor="end" >0</text>
<text x="47.3" y="479" font-size="10" font-weight="normal" fill="#111111" text-anchor="end" >-250</text>
<text x="47.3" y="512" font-size="10" font-weight="normal" fill="#111111" text-anchor="end" >-500</text>
<text x="78.5" y="533" font-size="10" font-weight="normal" fill="#111111" text-anchor="middle" >-400</text>
<text x="109.5" y="533" font-size="10" font-weight="normal" fill="#111111" text-anchor="middle" >-350</text>
<text x="139.5" y="533" font-size="10" font-weight="normal" fill="#111111" text-anchor="middle" >-300</text>
<text x="170.5" y="533" font-size="10" font-weight="normal" fill="#111111" text-anchor="middle" >-250</text>
<text x="200.5" y="533" font-size="10" font-weight="normal" fill="#111111" text-anchor="middle" >-200</text>
<text x="231.5" y="533" font-size="10" font-weight="normal" fill="#111111" text-anchor="middle" >-150</text>
<text x="261.5" y="533" font-size="10" font-weight="normal" fill="#111111" text-anchor="middle" >-100</text>
<text x="292.5" y="533" font-size="10" font-weight="normal" fill="#111111" text-anchor="middle" >-50</text>
<text x="323.5" y="533" font-size="10" font-weight="normal" fill="#111111" text-anchor="middle" >0</text>
<text x="353.5" y="533" font-size="10" font-weight="normal" fill="#111111" text-anchor="middle" >50</text>
<text x="384.5" y="533" font-size="10" font-weight="normal" fill="#111111" text-anchor="middle" >100</text>
<text x="414.5" y="533" font-size="10" font-weight="normal" fill="#111111" text-anchor="middle" >150</text>
<text x="445.5" y="533" font-size="10" font-weight="normal" fill="#111111" text-anchor="middle" >200</text>
<text x="475.5" y="533" font-size="10" font-weight="normal" fill="#111111" text-anchor="middle" >250</text>
<text x="506.5" y="533" font-size="10" font-weight="normal" fill="#111111" text-anchor="middle" >300</text>
<text x="536.5" y="533" font-size="10" font-weight="normal" fill="#111111" text-anchor="middle" >350</text>
<text x="567.5" y="533" font-size="10" font-weight="normal" fill="#111111" text-anchor="middle" >400</text>
<text transform="translate(16.6 442.6) rotate(-90)" x="0" y="0" font-size="10" fill="#111" text-anchor="middle" letter-spacing="0.29">Bond Portfolio Value Change (USD)</text>
<text x="302" y="551.4" font-size="10" font-weight="normal" fill="#111111" text-anchor="middle" letter-spacing="0.18" >Interest Rate Shift (in basis points)</text>
<text x="301.5" y="565.6" font-size="10" font-weight="normal" fill="#ffffff" text-anchor="middle" letter-spacing="0.29" >Assumes equal percentage price changes for all underlyings.</text>
<rect x="238.3" y="567.5" width="24.7" height="3" fill="#dd0000" />
<rect x="268.3" y="567.5" width="47.3" height="3" fill="#aa00ff" />
<rect x="321.3" y="567.5" width="44.7" height="3" fill="#006600" />
<text x="238.3" y="583.9" font-size="12" font-weight="bold" fill="#ffffff" text-anchor="start" letter-spacing="-0.1" >Real</text>
<text x="268.3" y="583.9" font-size="12" font-weight="bold" fill="#ffffff" text-anchor="start" letter-spacing="-0.2" >Vol+15%</text>
<text x="321.3" y="583.9" font-size="12" font-weight="bold" fill="#ffffff" text-anchor="start" letter-spacing="-0.1" >Vol-15%</text>
<text x="612.7" y="345.8" font-size="11.6" font-weight="normal" fill="#ffffff" text-anchor="start" letter-spacing="0.05" >Report:</text>
<text x="612.7" y="368.9" font-size="11.6" font-weight="normal" fill="#ffffff" text-anchor="start" letter-spacing="0.05" >Plot:</text>
<text x="612.7" y="391.8" font-size="11.6" font-weight="normal" fill="#ffffff" text-anchor="start" letter-spacing="0.05" >Currency:</text>
<text x="612.7" y="413.8" font-size="11.6" font-weight="normal" fill="#ffffff" text-anchor="start" letter-spacing="0.05" >Issuer:</text>
<text x="612.7" y="438.2" font-size="11.6" font-weight="normal" fill="#ffffff" text-anchor="start" letter-spacing="0.05" >Drill:</text>
<rect x="666" y="331" width="312" height="20" fill="#ffffff" />
<rect x="666" y="351" width="312" height="1" fill="#6e6e6e" />
<text x="665.6" y="346.1" font-size="12" font-weight="normal" fill="#000" text-anchor="start" letter-spacing="0.28" >Risk by Issuer</text>
<path d="M966 339 L976 339 L971 344 Z" fill="#000"/>
<rect x="666" y="353" width="312" height="20" fill="#ffffff" />
<rect x="666" y="373" width="312" height="1" fill="#6e6e6e" />
<text x="666.7" y="368.1" font-size="12" font-weight="normal" fill="#000" text-anchor="start" letter-spacing="0.28" >Bond Portfolio Value Change</text>
<path d="M966 361 L976 361 L971 366 Z" fill="#000"/>
<rect x="666" y="375" width="312" height="20" fill="#ffffff" />
<rect x="666" y="395" width="312" height="1" fill="#6e6e6e" />
<text x="665.6" y="390.1" font-size="12" font-weight="normal" fill="#000" text-anchor="start" letter-spacing="0.28" >All Currencies</text>
<path d="M966 383 L976 383 L971 388 Z" fill="#000"/>
<rect x="666" y="397" width="312" height="20" fill="#ffffff" />
<rect x="666" y="417" width="312" height="1" fill="#6e6e6e" />
<text x="667.2" y="412.1" font-size="12" font-weight="normal" fill="#000" text-anchor="start" letter-spacing="0.28" >All Issuers</text>
<path d="M966 405 L976 405 L971 410 Z" fill="#000"/>
<rect x="667.5" y="421" width="24" height="23.5" fill="#1a1a1a" />
<rect x="666" y="419.4" width="24" height="23.6" fill="#f2f2f2" />
<rect x="666" y="419.4" width="24" height="3.4" fill="#ddd4d4" />
<rect x="666" y="422.8" width="24" height="3.4" fill="#a8cdee" />
<rect x="668" y="423.8" width="8" height="1" fill="#ffffff" />
<rect x="666" y="426.2" width="24" height="1.2" fill="#e8f0f0" />
<rect x="666" y="427.4" width="24" height="1.8" fill="#70e070" />
<rect x="666" y="429.2" width="24" height="1.8" fill="#d4f4d4" />
<rect x="666" y="431" width="24" height="2.4" fill="#9ae89a" />
<rect x="667" y="429.6" width="8" height="3" fill="#e8f8e8" />
<rect x="666" y="433.4" width="24" height="2.2" fill="#b0d4f0" />
<rect x="666" y="435.6" width="24" height="7.4" fill="#f0f0f0" />
<path d="M667 441 L672 438.5 L678 437.5" stroke="#d07070" stroke-width="0.7" fill="none"/>
<rect x="680" y="437" width="8" height="4" fill="#d8d8d8" />
<rect x="678.6" y="426.9" width="3.8" height="10.1" fill="#4a5ae0" />
<rect x="674.8" y="430.5" width="10.7" height="4" fill="#4a5ae0" />
<rect x="693.3" y="421" width="24" height="23.5" fill="#1a1a1a" />
<rect x="691.8" y="419.4" width="24" height="23.6" fill="#f2f2f2" />
<rect x="691.8" y="419.4" width="24" height="3.4" fill="#ddd4d4" />
<rect x="691.8" y="422.8" width="24" height="3.4" fill="#a8cdee" />
<rect x="693.8" y="423.8" width="8" height="1" fill="#ffffff" />
<rect x="691.8" y="426.2" width="24" height="1.2" fill="#e8f0f0" />
<rect x="691.8" y="427.4" width="24" height="1.8" fill="#70e070" />
<rect x="691.8" y="429.2" width="24" height="1.8" fill="#d4f4d4" />
<rect x="691.8" y="431" width="24" height="2.4" fill="#9ae89a" />
<rect x="692.8" y="429.6" width="8" height="3" fill="#e8f8e8" />
<rect x="691.8" y="433.4" width="24" height="2.2" fill="#b0d4f0" />
<rect x="691.8" y="435.6" width="24" height="7.4" fill="#f0f0f0" />
<path d="M692.8 441 L697.8 438.5 L703.8 437.5" stroke="#d07070" stroke-width="0.7" fill="none"/>
<rect x="705.8" y="437" width="8" height="4" fill="#d8d8d8" />
<rect x="701.9" y="431.3" width="10.1" height="3.5" fill="#4a5ae0" />
<path d="M863.8 515.5 L863.8 531 L867.3 527.8 L870.3 533.5 L872.8 532.3 L870 526.7 L874.5 526.7 Z" fill="#fff" stroke="#000" stroke-width="0.9"/>
<rect x="4" y="587" width="976" height="20" fill="#000000" />
<text x="6.8" y="600.6" font-size="12" font-weight="normal" fill="#ffffff" text-anchor="start" letter-spacing="0.45" >DU18007</text>
<text x="66" y="600.6" font-size="12" font-weight="normal" fill="#ffffff" text-anchor="start" >|</text>
<text x="71.6" y="600.6" font-size="12" font-weight="normal" fill="#ffffff" text-anchor="start" letter-spacing="0.18" >Reference currency: USD</text>
<text x="216" y="600.6" font-size="12" font-weight="normal" fill="#ffffff" text-anchor="start" >|</text>
<text x="221.6" y="600.6" font-size="12" font-weight="normal" fill="#ffffff" text-anchor="start" >Beta Reference:</text>
<text x="315.6" y="600.6" font-size="12" font-weight="normal" fill="#ffffff" text-anchor="start" >SPX</text>
<text x="345.5" y="600.6" font-size="12" font-weight="normal" fill="#ffffff" text-anchor="start" >|</text>
<text x="353" y="600.6" font-size="12" font-weight="normal" fill="#ffffff" text-anchor="start" letter-spacing="0.21" >Included Bond Positions: 4</text>
<rect x="911" y="587" width="69" height="18" fill="#009900" />
<text x="945.5" y="600.6" font-size="12" font-weight="normal" fill="#ffffff" text-anchor="middle" >Live update</text>
</svg>
</body></html>
